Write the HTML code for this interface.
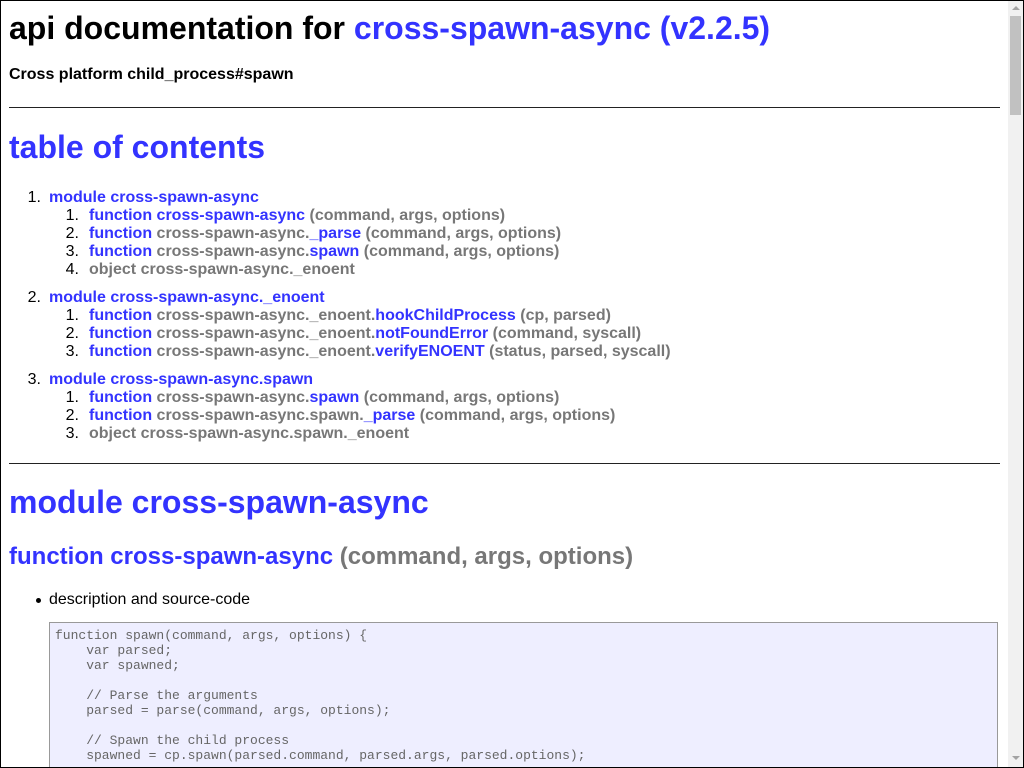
<!DOCTYPE html>
<html><head><meta charset="utf-8"><style>
html,body{margin:0;padding:0;background:#fff;overflow:hidden;width:1024px;height:768px;}
#f{position:absolute;left:0;top:0;width:1022px;height:766px;border:1px solid #000;overflow:hidden;font-family:"Liberation Sans",sans-serif;}
.a{position:absolute;white-space:nowrap;}
.b{color:#3333ff;}
.g{color:#777;}
.h1{font-size:32px;font-weight:bold;line-height:36px;}
.h2{font-size:24px;font-weight:bold;line-height:28px;}
.li{font-size:16px;font-weight:bold;line-height:18px;}
.n{font-weight:normal;color:#000;position:absolute;text-align:right;width:30px;}
.hr{position:absolute;left:8px;width:991px;height:1px;background:#222;}
#sb{position:absolute;left:1007px;top:0;width:15px;height:766px;background:#f1f1f1;}
#th{position:absolute;left:2px;top:15px;width:11px;height:99px;background:#c1c1c1;}
pre{position:absolute;left:48px;top:621px;width:949px;height:160px;margin:0;background:#eeeeff;border:1px solid #999;font-family:"Liberation Mono",monospace;font-size:13px;line-height:15px;color:#666;padding:5px 5px;box-sizing:border-box;overflow:hidden;}
</style></head><body><div id="f">
<div class="a h1" style="left:8px;top:9px">api documentation for <span class="b">cross-spawn-async (v2.2.5)</span></div>
<div class="a li" style="left:8px;top:65px;color:#000">Cross platform child_process#spawn</div>
<div class="hr" style="top:106px"></div>
<div class="a h1 b" style="left:8px;top:128px">table of contents</div>

<div class="a li" style="left:48px;top:188px"><span class="n" style="left:-48px;width:40px">1.</span><span class="b">module cross-spawn-async</span></div>
<div class="a li" style="left:88px;top:206px"><span class="n" style="left:-40px">1.</span><span class="b">function cross-spawn-async</span> <span class="g">(command, args, options)</span></div>
<div class="a li" style="left:88px;top:224px"><span class="n" style="left:-40px">2.</span><span class="b">function</span> <span class="g">cross-spawn-async.</span><span class="b">_parse</span> <span class="g">(command, args, options)</span></div>
<div class="a li" style="left:88px;top:242px"><span class="n" style="left:-40px">3.</span><span class="b">function</span> <span class="g">cross-spawn-async.</span><span class="b">spawn</span> <span class="g">(command, args, options)</span></div>
<div class="a li g" style="left:88px;top:260px"><span class="n" style="left:-40px">4.</span>object cross-spawn-async._enoent</div>

<div class="a li" style="left:48px;top:288px"><span class="n" style="left:-48px;width:40px">2.</span><span class="b">module cross-spawn-async._enoent</span></div>
<div class="a li" style="left:88px;top:306px"><span class="n" style="left:-40px">1.</span><span class="b">function</span> <span class="g">cross-spawn-async._enoent.</span><span class="b">hookChildProcess</span> <span class="g">(cp, parsed)</span></div>
<div class="a li" style="left:88px;top:324px"><span class="n" style="left:-40px">2.</span><span class="b">function</span> <span class="g">cross-spawn-async._enoent.</span><span class="b">notFoundError</span> <span class="g">(command, syscall)</span></div>
<div class="a li" style="left:88px;top:342px"><span class="n" style="left:-40px">3.</span><span class="b">function</span> <span class="g">cross-spawn-async._enoent.</span><span class="b">verifyENOENT</span> <span class="g">(status, parsed, syscall)</span></div>

<div class="a li" style="left:48px;top:370px"><span class="n" style="left:-48px;width:40px">3.</span><span class="b">module cross-spawn-async.spawn</span></div>
<div class="a li" style="left:88px;top:388px"><span class="n" style="left:-40px">1.</span><span class="b">function</span> <span class="g">cross-spawn-async.</span><span class="b">spawn</span> <span class="g">(command, args, options)</span></div>
<div class="a li" style="left:88px;top:406px"><span class="n" style="left:-40px">2.</span><span class="b">function</span> <span class="g">cross-spawn-async.spawn.</span><span class="b">_parse</span> <span class="g">(command, args, options)</span></div>
<div class="a li g" style="left:88px;top:424px"><span class="n" style="left:-40px">3.</span>object cross-spawn-async.spawn._enoent</div>

<div class="hr" style="top:462px"></div>
<div class="a h1 b" style="left:8px;top:483px">module cross-spawn-async</div>
<div class="a h2" style="left:8px;top:542px"><span class="b">function cross-spawn-async</span> <span class="g">(command, args, options)</span></div>
<div class="a" style="left:48px;top:590px;font-size:16px;line-height:18px">description and source-code</div>
<div class="a" style="left:35px;top:597px;width:5px;height:5px;border-radius:3px;background:#000"></div>
<pre>function spawn(command, args, options) {
    var parsed;
    var spawned;

    // Parse the arguments
    parsed = parse(command, args, options);

    // Spawn the child process
    spawned = cp.spawn(parsed.command, parsed.args, parsed.options);
</pre>
<div id="sb"><div id="th"></div>
<div style="position:absolute;left:4px;top:5px;width:0;height:0;border-left:4px solid transparent;border-right:4px solid transparent;border-bottom:4px solid #a3a3a3"></div>
<div style="position:absolute;left:4px;top:755px;width:0;height:0;border-left:4px solid transparent;border-right:4px solid transparent;border-top:4px solid #a3a3a3"></div>
</div>
</div></body></html>
